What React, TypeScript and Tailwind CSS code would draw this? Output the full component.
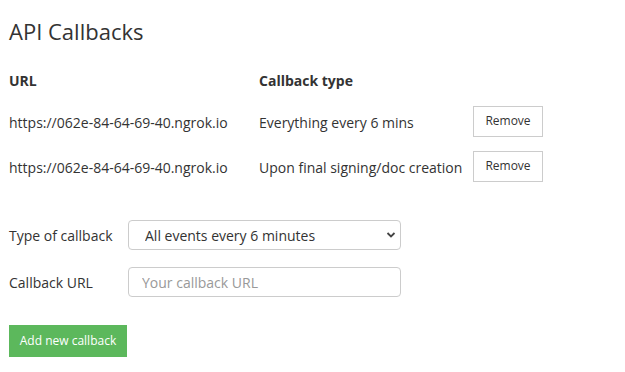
import React, { useState } from 'react';

interface Callback {
  url: string;
  type: string;
}

const callbacks: Callback[] = [
  { url: 'https://062e-84-64-69-40.ngrok.io', type: 'Everything every 6 mins' },
  { url: 'https://062e-84-64-69-40.ngrok.io', type: 'Upon final signing/doc creation' },
];

export default function App() {
  const [kind, setKind] = useState('all');
  const [url, setUrl] = useState('');

  return (
    <div
      className="min-h-screen bg-white pt-[16px] pl-[9px] text-[#333] text-[14px]"
      style={{ fontFamily: '"Open Sans", "Liberation Sans", sans-serif' }}
    >
      <h1 className="h-[30px] text-[22px] leading-[30px] font-normal text-[#333]">API Callbacks</h1>

      {/* table */}
      <div className="mt-[24px] flex h-[20px] items-center font-bold">
        <div className="w-[250px]">URL</div>
        <div>Callback type</div>
      </div>

      <div className="mt-[15px] flex flex-col gap-[13px]">
        {callbacks.map((cb, i) => (
          <div key={i} className="flex h-[32px] items-center">
            <div className="w-[250px] pt-[3px]">{cb.url}</div>
            <div className="w-[214px] pt-[3px]">{cb.type}</div>
            <button className="h-[31px] w-[70px] border border-[#ccc] bg-white text-[12px] text-[#333]">
              Remove
            </button>
          </div>
        ))}
      </div>

      {/* form */}
      <div className="mt-[38px] flex flex-col gap-[17px]">
        <div className="flex items-center">
          <label className="w-[119px]">Type of callback</label>
          <div className="relative h-[30px] w-[273px]">
            <select
              value={kind}
              onChange={e => setKind(e.target.value)}
              className="h-full w-full appearance-none rounded-[4px] border border-[#ccc] bg-white pl-[16px] text-[14px] text-[#333] outline-none"
            >
              <option value="all">All events every 6 minutes</option>
              <option value="final">Upon final signing/doc creation</option>
            </select>
            <svg
              className="pointer-events-none absolute right-[5px] top-[11px]"
              width="10"
              height="8"
              viewBox="0 0 10 8"
            >
              <path d="M1.5 2 L5 5.5 L8.5 2" fill="none" stroke="#444" strokeWidth="1.8" />
            </svg>
          </div>
        </div>

        <div className="flex items-center">
          <label className="w-[119px]">Callback URL</label>
          <input
            value={url}
            onChange={e => setUrl(e.target.value)}
            placeholder="Your callback URL"
            className="h-[30px] w-[273px] rounded-[4px] border border-[#ccc] bg-white pl-[13px] text-[14px] text-[#333] outline-none placeholder:text-[#999]"
          />
        </div>
      </div>

      <button className="mt-[28px] h-[32px] w-[118px] bg-[#5cb85c] text-[12px] text-white">
        Add new callback
      </button>
    </div>
  );
}
